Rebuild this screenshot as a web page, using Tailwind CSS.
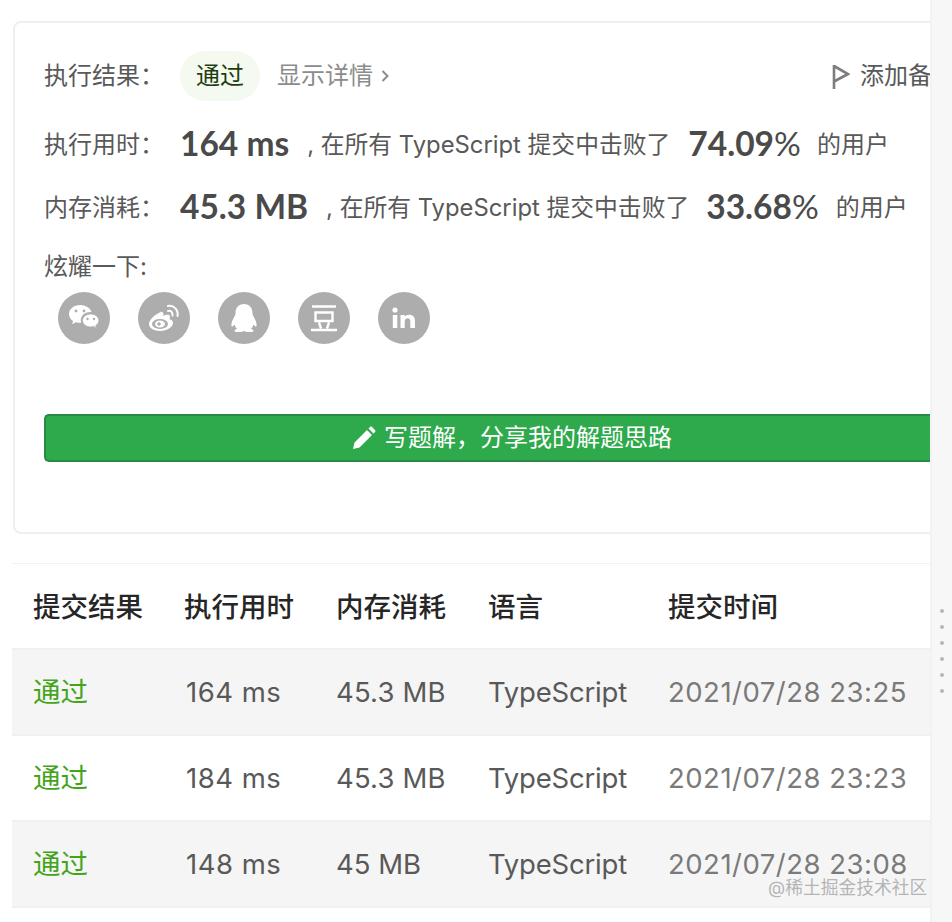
<!DOCTYPE html>
<html lang="zh"><head><meta charset="utf-8"><script src="https://cdn.jsdelivr.net/npm/@tailwindcss/browser@4"></script></head>
<body class="m-0 bg-white">
<div class="relative flex w-[952px] h-[922px] overflow-hidden bg-white font-['Inter','Noto_Sans_CJK_SC',sans-serif] text-[#595959]">
  <main class="w-[930px] shrink-0 overflow-hidden pt-[21px]">
    <section class="ml-[13px] w-[960px] h-[513px] border-2 border-[#efefef] rounded-lg pl-[29px] pt-[27px] bg-white">
      <div class="flex items-center h-[52px] text-[24px]">
        <span class="w-[136px] shrink-0">执行结果：</span>
        <span class="w-[80px] h-[50px] rounded-full bg-[#f5faf1] text-[#1f3d0f] flex items-center justify-center shrink-0">通过</span>
        <span class="ml-[17px] text-[#8c8c8c] flex items-center shrink-0">显示详情
          <svg class="ml-[8px]" width="8" height="14" viewBox="0 0 8 14"><path d="M1.500 2l5 5-5 5" fill="none" stroke="#8c8c8c" stroke-width="2"/></svg></span>
        <span class="ml-[443px] flex items-center shrink-0 whitespace-nowrap">
          <svg width="18" height="25" viewBox="0 0 18 25" class="mr-[10px]"><path d="M2 1v24M2 2l14 8-14 7.500" fill="none" stroke="#7d7d7d" stroke-width="2.600"/></svg>添加备注</span>
      </div>
      <div class="flex items-center h-[38px] mt-[24px] text-[23.800px] whitespace-nowrap">
        <span class="w-[136px] shrink-0 text-[24px]">执行用时：</span>
        <span class="mb-[4px] text-[33.500px] font-bold text-[#4a4a4a] font-['Lato','Noto_Sans_CJK_SC',sans-serif]">164 ms</span>
        <span class="ml-[18px]">, 在所有 TypeScript 提交中击败了</span>
        <span class="mb-[4px] ml-[18px] text-[33.500px] font-bold text-[#4a4a4a] font-['Lato','Noto_Sans_CJK_SC',sans-serif]">74.09<span class="font-normal">%</span></span>
        <span class="ml-[16px] text-[24px]">的用户</span>
      </div>
      <div class="flex items-center h-[38px] mt-[25px] text-[23.800px] whitespace-nowrap">
        <span class="w-[136px] shrink-0 text-[24px]">内存消耗：</span>
        <span class="mb-[4px] text-[33.500px] font-bold text-[#4a4a4a] font-['Lato','Noto_Sans_CJK_SC',sans-serif]">45.3 MB</span>
        <span class="ml-[18px]">, 在所有 TypeScript 提交中击败了</span>
        <span class="mb-[4px] ml-[17px] text-[33.500px] font-bold text-[#4a4a4a] font-['Lato','Noto_Sans_CJK_SC',sans-serif]">33.68<span class="font-normal">%</span></span>
        <span class="ml-[17px] text-[24px]">的用户</span>
      </div>
      <div class="mt-[22px] h-[36px] text-[24px] leading-[36px]">炫耀一下:</div>
      <div class="flex gap-[28px] ml-[14px] mt-[7px]">
        <span class="w-[52px] h-[52px] rounded-full bg-[#adadad] flex items-center justify-center">
          <svg width="32" height="28" viewBox="0 0 32 28" fill="#fff"><path d="M12 1C5.900 1 1 5 1 10c0 2.900 1.600 5.400 4.100 7l-1 3.300 3.800-2.100c1.300.4 2.700.6 4.100.6.400 0 .8 0 1.200-.1-.3-.9-.4-1.700-.4-2.600C12.800 11.500 17.200 8 22.600 8c.3 0 .6 0 .9 0C22.300 4 17.600 1 12 1z"/><path d="M22.600 10C18 10 14.500 13 14.500 16.500S18 23 22.600 23c1 0 2-.2 2.900-.5l3 1.700-.8-2.600c1.900-1.300 3.200-3 3.200-5.100C31 13 27.200 10 22.600 10z" stroke="#adadad" stroke-width=".8"/><circle cx="8" cy="7" r="1.400" fill="#adadad"/><circle cx="16" cy="7" r="1.400" fill="#adadad"/><circle cx="19.500" cy="15" r="1.200" fill="#adadad"/><circle cx="26" cy="15" r="1.200" fill="#adadad"/></svg></span>
        <span class="w-[52px] h-[52px] rounded-full bg-[#adadad] flex items-center justify-center">
          <svg width="32" height="28" viewBox="0 0 32 28"><path d="M13 8C7 10 1 16 1 20c0 4 5 7 11 7 7 0 13-4 13-8 0-3-3-3.500-3.500-4 .8-2 .5-3.500-.5-4-1.500-.8-4 0-5.500.7 0-2-.5-4.700-3-3.700z" fill="#fff"/><ellipse cx="12" cy="20" rx="8" ry="5" fill="#adadad"/><ellipse cx="12" cy="20" rx="5" ry="3.500" fill="#fff"/><circle cx="11" cy="20" r="1.800" fill="#adadad"/><path d="M20 7c3-.8 5 1.500 4.500 4.500M20 2c6-1 10.500 4 9.500 10" fill="none" stroke="#fff" stroke-width="2" stroke-linecap="round"/></svg></span>
        <span class="w-[52px] h-[52px] rounded-full bg-[#adadad] flex items-center justify-center">
          <svg width="32" height="32" viewBox="0 0 32 32" fill="#fff"><path d="M16 2c-5.500 0-8.500 4-8.500 9 0 1.500-.5 2.500-1 3.500C4.500 18 3 21 3.500 24c.5 1.300 1.800.2 3-1.500.5 2 1.500 3.300 2.500 4.300C7.500 27.500 6.500 28 6.500 29c0 1 2 1 5 1 2 0 3.500-.5 4.500-1 1 .5 2.500 1 4.500 1 3 0 5 0 5-1 0-1-1-1.500-2.500-2.200 1-1 2-2.300 2.500-4.300 1.200 1.700 2.500 2.800 3 1.500.5-3-1-6-3-9.500-.5-1-1-2-1-3.500 0-5-3-9-8.500-9z"/></svg></span>
        <span class="w-[52px] h-[52px] rounded-full bg-[#adadad] flex items-center justify-center">
          <svg width="28" height="28" viewBox="0 0 28 28" fill="none" stroke="#fff" stroke-width="2.400"><path d="M2 2.500h24M5.500 8.500h17v8.500h-17zM1 26h26M9 18.500l2 6M19 18.500l-2 6"/></svg></span>
        <span class="w-[52px] h-[52px] rounded-full bg-[#adadad] flex items-center justify-center">
          <svg width="24" height="22" viewBox="0 0 24 22" fill="#fff"><circle cx="3" cy="3" r="2.600"/><path d="M.8 8h4.500v13H.8zM8.500 8h4.200v2c.9-1.400 2.400-2.300 4.400-2.300 4.100 0 5.900 2.300 5.900 6.700V21H18.300v-6c0-2.400-.7-3.700-2.600-3.700-2 0-3 1.400-3 3.700v6H8.500z"/></svg></span>
      </div>
      <button class="mt-[70px] h-[48px] w-[934px] rounded-[5px] bg-[#2ea94c] border-y-2 border-l-2 border-[#2a8a42] text-white text-[24px] flex items-center justify-center">
        <svg width="24" height="24" viewBox="0 0 24 24" fill="#fff" class="mr-[8px]"><path d="M1 23l1.500-6.500L15 4l5 5L7.500 21.500zM16.500 2.500l1.500-1.500c.6-.6 1.500-.6 2 0l3 3c.6.6.6 1.500 0 2l-1.500 1.500z"/></svg>写题解，分享我的解题思路
      </button>
    </section>

    <section class="ml-[12px] mt-[29px] w-[930px] border-t border-[#f2f2f2] text-[27.500px]">
      <div class="flex items-center h-[84px] pt-[3px] bg-white font-medium text-[#262626]">
        <span class="w-[151px] pl-[21px] shrink-0">提交结果</span><span class="w-[152px] pl-[21px] shrink-0">执行用时</span><span class="w-[152px] pl-[21px] shrink-0">内存消耗</span><span class="w-[180px] pl-[21px] shrink-0">语言</span><span class="pl-[21px]">提交时间</span>
      </div>
      <div class="flex items-center h-[86px] pt-[2px] bg-[#f5f5f5] border-t-2 border-[#f0f0f0]">
        <span class="w-[151px] pl-[21px] shrink-0 text-[#43a41a]">通过</span><span class="w-[152px] pl-[23px] shrink-0 tracking-[0.5px]">164 ms</span><span class="w-[152px] pl-[21px] shrink-0 tracking-[0.15px]">45.3 MB</span><span class="w-[180px] pl-[21px] shrink-0 tracking-[-0.2px]">TypeScript</span><span class="pl-[21px] text-[#7a7a7a] tracking-[0.5px]">2021/07/28 23:25</span>
      </div>
      <div class="flex items-center h-[86px] pt-[2px] bg-white border-t-2 border-[#f0f0f0]">
        <span class="w-[151px] pl-[21px] shrink-0 text-[#43a41a]">通过</span><span class="w-[152px] pl-[23px] shrink-0 tracking-[0.5px]">184 ms</span><span class="w-[152px] pl-[21px] shrink-0 tracking-[0.15px]">45.3 MB</span><span class="w-[180px] pl-[21px] shrink-0 tracking-[-0.2px]">TypeScript</span><span class="pl-[21px] text-[#7a7a7a] tracking-[0.5px]">2021/07/28 23:23</span>
      </div>
      <div class="flex items-center h-[86px] pt-[2px] bg-[#f5f5f5] border-t-2 border-[#f0f0f0]">
        <span class="w-[151px] pl-[21px] shrink-0 text-[#43a41a]">通过</span><span class="w-[152px] pl-[23px] shrink-0 tracking-[0.5px]">148 ms</span><span class="w-[152px] pl-[21px] shrink-0">45 MB</span><span class="w-[180px] pl-[21px] shrink-0 tracking-[-0.2px]">TypeScript</span><span class="pl-[21px] text-[#7a7a7a] tracking-[0.5px]">2021/07/28 23:08</span>
      </div>
      <div class="h-[30px] bg-white border-t-2 border-[#f0f0f0]"></div>
    </section>
  </main>
  <aside class="flex-1 bg-[#f7f7f7] border-l-2 border-[#f2f2f2] flex flex-col items-center pt-[609px] gap-[12px]">
    <i class="block w-[4px] h-[4px] rounded-full bg-[#b5b5b5]"></i><i class="block w-[4px] h-[4px] rounded-full bg-[#b5b5b5]"></i><i class="block w-[4px] h-[4px] rounded-full bg-[#b5b5b5]"></i><i class="block w-[4px] h-[4px] rounded-full bg-[#b5b5b5]"></i><i class="block w-[4px] h-[4px] rounded-full bg-[#b5b5b5]"></i><i class="block w-[4px] h-[4px] rounded-full bg-[#b5b5b5]"></i>
  </aside>
  <span class="absolute left-[768px] top-[878px] text-[17.750px] leading-[20px] text-[#a3a3a3]/80">@稀土掘金技术社区</span>
</div>
</body></html>
